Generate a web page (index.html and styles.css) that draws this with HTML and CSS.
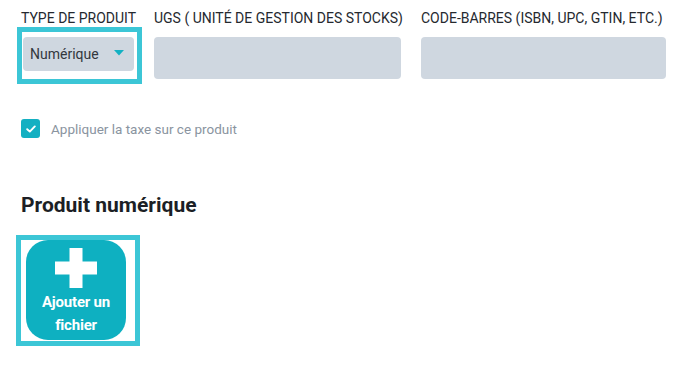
FILE: index.html
```html
<!DOCTYPE html>
<html lang="fr">
<head>
<meta charset="utf-8">
<link rel="stylesheet" href="styles.css">
</head>
<body>
<div class="page">
  <div class="fields">
    <div class="field">
      <div class="label">TYPE DE PRODUIT</div>
      <div class="hl hl-select">
        <div class="select">
          <span>Numérique</span>
          <svg class="caret" width="10" height="6" viewBox="0 0 10 6"><path d="M0 0H10L5 5.5Z" fill="#13b1c3"/></svg>
        </div>
      </div>
    </div>
    <div class="field">
      <div class="label">UGS ( UNITÉ DE GESTION DES STOCKS)</div>
      <div class="input"></div>
    </div>
    <div class="field">
      <div class="label">CODE-BARRES (ISBN, UPC, GTIN, ETC.)</div>
      <div class="input"></div>
    </div>
  </div>

  <label class="check">
    <span class="box"><svg width="10" height="8" viewBox="0 0 10 8"><path d="M1.2 4.2L3.8 6.6L8.8 1.4" fill="none" stroke="#fff" stroke-width="1.9" stroke-linecap="round" stroke-linejoin="round"/></svg></span>
    <span class="check-text">Appliquer la taxe sur ce produit</span>
  </label>

  <h2 class="title">Produit numérique</h2>

  <div class="hl hl-upload">
    <div class="upload">
      <svg class="plus" width="42" height="40" viewBox="0 0 42 40"><path d="M14.5 0H27.5V13.5H42V26.5H27.5V40H14.5V26.5H0V13.5H14.5Z" fill="#fff"/></svg>
      <div class="upload-text">Ajouter un<br>fichier</div>
    </div>
  </div>
</div>
</body>
</html>
```

FILE: styles.css
```css
* { box-sizing: border-box; }
html, body { margin: 0; padding: 0; background: #fff; }
body {
  font-family: Roboto, "Noto Sans", "Liberation Sans", sans-serif;
  color: #22262c;
}
.page { padding: 10px 21px 0 21px; }

.fields {
  display: grid;
  grid-template-columns: 113px 247px 245px;
  column-gap: 20px;
}
.label {
  font-size: 14px;
  line-height: 17px;
  height: 17px;
  white-space: nowrap;
  color: #25292f;
  letter-spacing: 0;
}
.input {
  margin-top: 10px;
  height: 42px;
  background: #cfd7e0;
  border-radius: 4px;
}

.hl { border: 5px solid #3cc6d6; }
.hl-select {
  margin-left: -4px;
  width: 125px;
  height: 57px;
  padding: 5px 0 0 1px;
}
.select {
  width: 111px;
  height: 34px;
  background: #cfd7e0;
  border-radius: 4px;
  display: flex;
  align-items: center;
  justify-content: space-between;
  padding: 0 10px 0 7px;
  font-size: 14px;
  color: #33373d;
}
.caret { margin-top: -2px; }

.check {
  display: flex;
  align-items: center;
  gap: 11px;
  margin-top: 35px;
}
.box {
  width: 19px;
  height: 19px;
  border-radius: 3px;
  background: #14b0c2;
  display: flex;
  align-items: center;
  justify-content: center;
}
.check-text {
  font-size: 13.5px;
  color: #8a94a0;
}

.title {
  margin: 55px 0 0 0;
  font-size: 21px;
  line-height: 24px;
  font-weight: 700;
  color: #1c1f25;
}

.hl-upload {
  margin: 18px 0 0 -5px;
  width: 124px;
  height: 111px;
  padding: 0 0 0 5px;
}
.upload {
  width: 100px;
  height: 100px;
  background: #0eb0c1;
  border-radius: 22px;
  display: flex;
  flex-direction: column;
  align-items: center;
  padding-top: 8px;
  color: #fff;
}
.upload-text {
  margin-top: 3px;
  font-size: 15px;
  line-height: 23px;
  font-weight: 700;
  text-align: center;
  letter-spacing: -0.2px;
}
```
